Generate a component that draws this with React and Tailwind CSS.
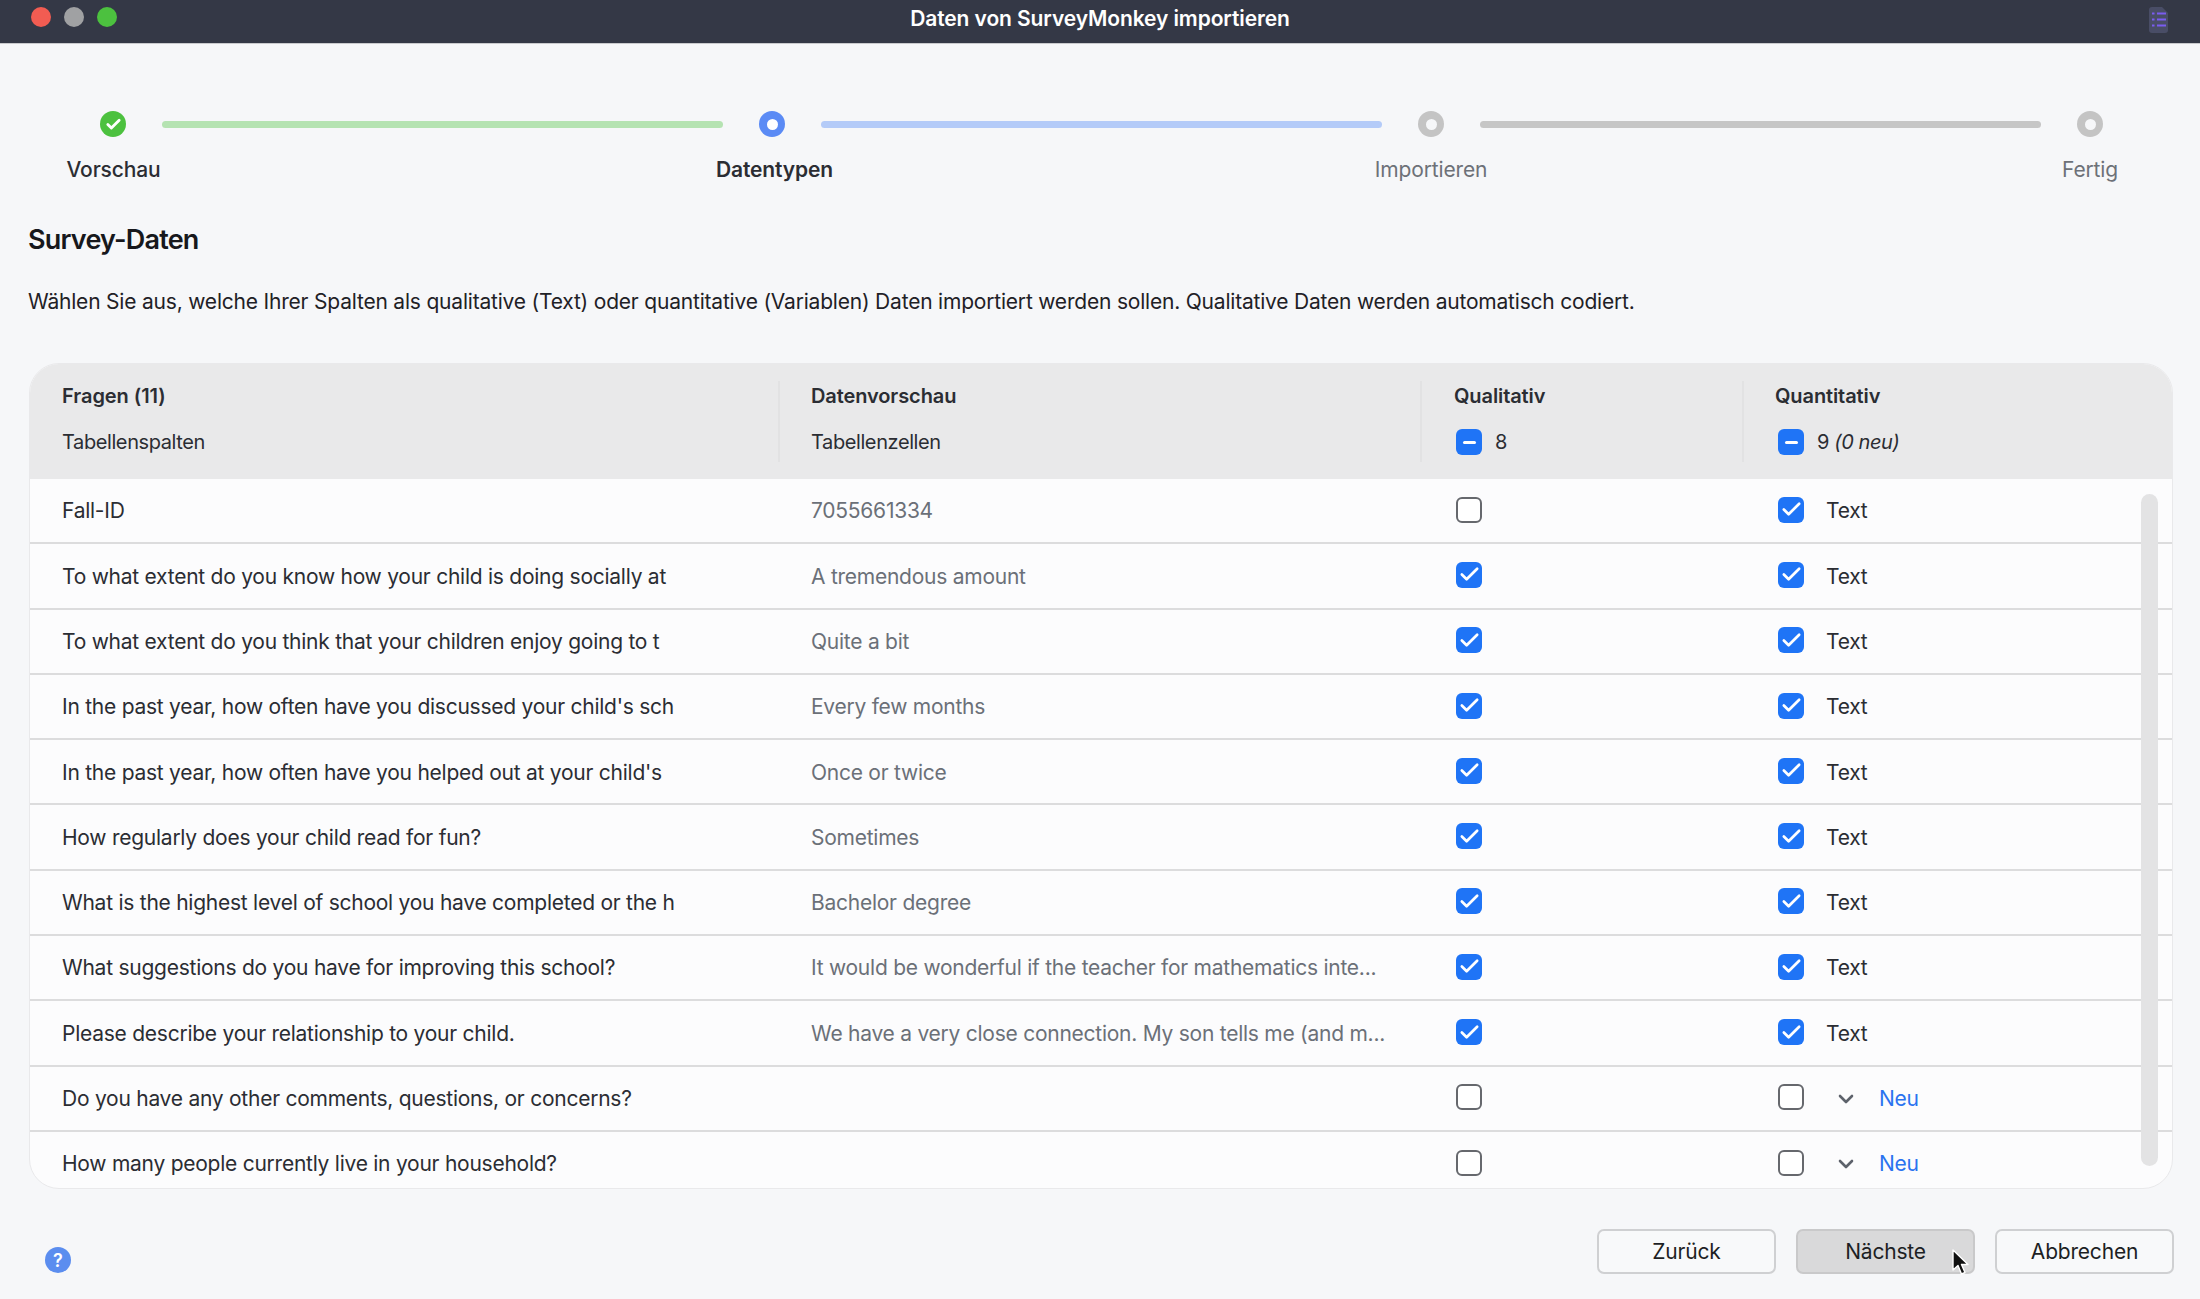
import React from 'react';
import { Check, ChevronDown } from 'lucide-react';

const fragen = [
  { frage: 'Fall-ID', vorschau: '7055661334', qual: false, quant: true },
  { frage: 'To what extent do you know how your child is doing socially at', vorschau: 'A tremendous amount', qual: true, quant: true },
  { frage: 'To what extent do you think that your children enjoy going to t', vorschau: 'Quite a bit', qual: true, quant: true },
  { frage: "In the past year, how often have you discussed your child's sch", vorschau: 'Every few months', qual: true, quant: true },
  { frage: "In the past year, how often have you helped out at your child's", vorschau: 'Once or twice', qual: true, quant: true },
  { frage: 'How regularly does your child read for fun?', vorschau: 'Sometimes', qual: true, quant: true },
  { frage: 'What is the highest level of school you have completed or the h', vorschau: 'Bachelor degree', qual: true, quant: true },
  { frage: 'What suggestions do you have for improving this school?', vorschau: 'It would be wonderful if the teacher for mathematics inte...', qual: true, quant: true },
  { frage: 'Please describe your relationship to your child.', vorschau: 'We have a very close connection. My son tells me (and m...', qual: true, quant: true },
  { frage: 'Do you have any other comments, questions, or concerns?', vorschau: '', qual: false, quant: false },
  { frage: 'How many people currently live in your household?', vorschau: '', qual: false, quant: false },
];

const Checkbox = ({ checked }) =>
  checked ? (
    <div className="w-[26px] h-[26px] rounded-[6px] bg-[#1f74f6] flex items-center justify-center shrink-0">
      <Check className="w-[23px] h-[23px] text-white" strokeWidth={2.8} />
    </div>
  ) : (
    <div className="w-[26px] h-[26px] rounded-[6px] border-2 border-[#66686d] bg-white shrink-0"></div>
  );

const MixedCheckbox = () => (
  <div className="w-[26px] h-[26px] rounded-[6px] bg-[#1f74f6] flex items-center justify-center shrink-0">
    <div className="w-[13px] h-[3px] rounded-full bg-white"></div>
  </div>
);

const Step = ({ label, state, labelClass }) => (
  <div className="w-[26px] flex flex-col items-center shrink-0">
    {state === 'done' && (
      <div className="w-[26px] h-[26px] rounded-full bg-[#4cc13f] flex items-center justify-center">
        <Check className="w-[17px] h-[17px] text-white" strokeWidth={4} />
      </div>
    )}
    {state === 'active' && (
      <div className="w-[26px] h-[26px] rounded-full bg-[#5b8bf5] flex items-center justify-center">
        <div className="w-[11px] h-[11px] rounded-full bg-white"></div>
      </div>
    )}
    {state === 'todo' && (
      <div className="w-[26px] h-[26px] rounded-full bg-[#c4c4c4] flex items-center justify-center">
        <div className="w-[11px] h-[11px] rounded-full bg-[#f6f7f9]"></div>
      </div>
    )}
    <span
      className={`mt-[18px] h-[30px] leading-[30px] text-[21px] tracking-[-0.15px] whitespace-nowrap ${labelClass || ''} ${
        state === 'todo' ? 'text-[#6d7178]' : state === 'active' ? 'font-semibold text-[#2b2d33]' : 'font-medium text-[#2b2d33]'
      }`}
    >
      {label}
    </span>
  </div>
);

const Line = ({ color }) => (
  <div className={`h-[7px] w-[561px] rounded-full mx-[36px] mt-[10px] shrink-0 ${color}`}></div>
);

const Button = ({ children, active }) => (
  <button
    className={`w-[179px] h-[45px] rounded-[7px] border-2 text-[21px] tracking-[-0.2px] text-[#1d1f24] ${
      active ? 'bg-[#d9d9da] border-[#c9c9ca]' : 'bg-[#f8f9fa] border-[#cfd0d2]'
    }`}
  >
    {children}
  </button>
);

export default function App() {
  return (
    <div className="w-full h-screen bg-[#f6f7f9] flex flex-col overflow-hidden font-['Inter',sans-serif]">
      {/* Titelleiste */}
      <div className="h-[44px] shrink-0 bg-[#343846] border-b border-[#c9cacd] flex items-center justify-between relative">
        <div className="flex items-center gap-[13px] pl-[31px] pb-[9px]">
          <div className="w-[20px] h-[20px] rounded-full bg-[#f25c52]"></div>
          <div className="w-[20px] h-[20px] rounded-full bg-[#a0a1a3]"></div>
          <div className="w-[20px] h-[20px] rounded-full bg-[#4cc13f]"></div>
        </div>
        <span className="absolute left-0 right-0 text-center pb-[6px] text-[21px] font-semibold tracking-[-0.1px] text-white">
          Daten von SurveyMonkey importieren
        </span>
        <svg className="mr-[32px] mb-[4px]" width="19" height="26" viewBox="0 0 19 26">
          <path d="M3 0H13L19 6V23a3 3 0 0 1-3 3H3a3 3 0 0 1-3-3V3a3 3 0 0 1 3-3Z" fill="#494d66" />
          <path d="M3 6.5h2.5M8 6.5h9M3 12.5h2.5M8 12.5h9M3 18.5h2.5M8 18.5h9" stroke="#7a5cf0" strokeWidth="2" />
        </svg>
      </div>

      {/* Schritte */}
      <div className="flex items-start pl-[100px] pt-[67px]">
        <Step label="Vorschau" state="done" labelClass="ml-[1px]" />
        <Line color="bg-[#b5e3b2]" />
        <Step label="Datentypen" state="active" labelClass="ml-[5px]" />
        <Line color="bg-[#b4cbf8]" />
        <Step label="Importieren" state="todo" />
        <Line color="bg-[#c6c6c6]" />
        <Step label="Fertig" state="todo" />
      </div>

      <div className="pl-[28px] pr-[27px]">
        <h1 className="mt-[37px] h-[36px] leading-[36px] text-[27px] font-semibold tracking-[-0.8px] text-[#17181c]">Survey-Daten</h1>
        <p className="mt-[29px] h-[30px] leading-[30px] text-[21px] tracking-[-0.2px] text-[#1f2126]">
          Wählen Sie aus, welche Ihrer Spalten als qualitative (Text) oder quantitative (Variablen) Daten importiert werden sollen. Qualitative Daten werden automatisch codiert.
        </p>

        {/* Tabelle */}
        <div className="relative ml-[1px] mt-[46px] h-[826px] rounded-[30px] border border-[#e9e9eb] bg-[#fcfcfd] overflow-hidden text-[21px] tracking-[-0.25px] text-[#2b2d33]">
          <div className="h-[115px] bg-[#e9e9ea] grid grid-cols-[748px_642px_322px_1fr] py-[17px]">
            <div className="pl-[32px]">
              <div className="-mt-px h-[32px] leading-[32px] text-[20px] font-semibold tracking-[-0.05px]">Fragen (11)</div>
              <div className="mt-[14px] h-[32px] leading-[32px] text-[20px] tracking-[-0.4px]">Tabellenspalten</div>
            </div>
            <div className="pl-[31px] border-l-2 border-[#e2e2e3]">
              <div className="-mt-px h-[32px] leading-[32px] text-[20px] font-semibold tracking-[-0.1px]">Datenvorschau</div>
              <div className="mt-[14px] h-[32px] leading-[32px] text-[20px] tracking-[-0.4px]">Tabellenzellen</div>
            </div>
            <div className="pl-[32px] border-l-2 border-[#e2e2e3]">
              <div className="-mt-px h-[32px] leading-[32px] text-[20px] font-semibold tracking-[-0.1px]">Qualitativ</div>
              <div className="mt-[14px] flex items-center h-[32px] pl-[2px] gap-[13px] text-[20px]">
                <MixedCheckbox />
                <span>8</span>
              </div>
            </div>
            <div className="pl-[31px] border-l-2 border-[#e2e2e3]">
              <div className="-mt-px h-[32px] leading-[32px] text-[20px] font-semibold tracking-[-0.1px]">Quantitativ</div>
              <div className="mt-[14px] flex items-center h-[32px] pl-[3px] gap-[13px] text-[20px] tracking-[-0.4px]">
                <MixedCheckbox />
                <span>
                  9 <em className="italic">(0 neu)</em>
                </span>
              </div>
            </div>
          </div>

          {fragen.map((f, i) => (
            <div
              key={i}
              className="h-[65.3px] pt-[1px] border-b-2 border-[#dcdcdd] grid grid-cols-[748px_642px_322px_1fr] items-center"
            >
              <div className="pl-[32px] whitespace-nowrap">{f.frage}</div>
              <div className="pl-[33px] whitespace-nowrap text-[#6b7078]">{f.vorschau}</div>
              <div className="pl-[36px] pb-[3px]">
                <Checkbox checked={f.qual} />
              </div>
              <div className="pl-[36px] flex items-center">
                <div className="pb-[3px]">
                  <Checkbox checked={f.quant} />
                </div>
                {f.quant ? (
                  <span className="ml-[22px]">Text</span>
                ) : (
                  <>
                    <ChevronDown className="ml-[30px] w-[24px] h-[24px] text-[#5d626b]" strokeWidth={2.6} />
                    <span className="ml-[21px] text-[#2a73f0]">Neu</span>
                  </>
                )}
              </div>
            </div>
          ))}

          {/* Scrollbar */}
          <div className="absolute top-[130px] right-[14px] w-[17px] h-[672px] rounded-full bg-[#e3e3e4]"></div>
        </div>

        {/* Fusszeile */}
        <div className="mt-[40px] -mr-px flex items-end justify-between">
          <div className="ml-[17px] mb-px w-[26px] h-[26px] rounded-full bg-[#5b8def] flex items-center justify-center text-white text-[18px] font-semibold">
            ?
          </div>
          <div className="relative flex gap-[20px]">
            <Button>Zurück</Button>
            <Button active>Nächste</Button>
            <Button>Abbrechen</Button>
            <svg className="absolute left-[354px] top-[20px]" width="18" height="28" viewBox="0 0 18 28">
              <path d="M2 1V21L7 16.5L10.5 25L14 23.5L10.5 15.5H17Z" fill="#111" stroke="#fff" strokeWidth="1.4" strokeLinejoin="round" />
            </svg>
          </div>
        </div>
      </div>
    </div>
  );
}
